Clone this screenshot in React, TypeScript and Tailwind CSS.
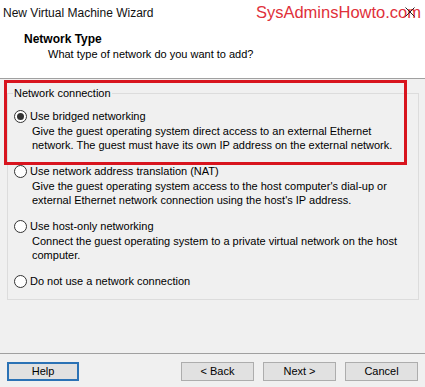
import React from 'react';

const options = [
  {
    label: 'Use bridged networking',
    desc: ['Give the guest operating system direct access to an external Ethernet', 'network. The guest must have its own IP address on the external network.'],
    checked: true,
  },
  {
    label: 'Use network address translation (NAT)',
    desc: ["Give the guest operating system access to the host computer's dial-up or", "external Ethernet network connection using the host's IP address."],
    checked: false,
  },
  {
    label: 'Use host-only networking',
    desc: ['Connect the guest operating system to a private virtual network on the host', 'computer.'],
    checked: false,
  },
  {
    label: 'Do not use a network connection',
    desc: [],
    checked: false,
  },
];

function Radio({ checked }: { checked: boolean }) {
  return (
    <span className="w-[13px] h-[13px] rounded-full border border-[#333333] bg-white flex items-center justify-center shrink-0">
      {checked && <span className="w-[7px] h-[7px] rounded-full bg-[#333333]" />}
    </span>
  );
}

function Button({ children, primary }: { children: React.ReactNode; primary?: boolean }) {
  return (
    <button
      className={`h-[19px] flex items-center justify-center bg-[#e1e1e1] text-[11px] leading-none text-black ${
        primary ? 'w-[72px] border-2 border-[#2b72b5]' : 'w-[73px] border border-[#adadad]'
      }`}
    >
      {children}
    </button>
  );
}

export default function App() {
  return (
    <div
      className="w-[425px] h-[387px] bg-[#f0f0f0] text-black relative overflow-hidden flex flex-col"
      style={{ fontFamily: '"Liberation Sans", Arial, sans-serif' }}
    >
      {/* Header */}
      <div className="h-[79px] bg-white border-b border-[#a0a0a0] shrink-0">
        <div className="h-[25px] flex items-center justify-between pl-[3px] pr-[4px]">
          <span className="text-[12px] text-[#111]">New Virtual Machine Wizard</span>
          <span className="text-[16.5px] text-[#e0303a]">SysAdminsHowto.com</span>
        </div>
        <div className="mt-[7px] pl-[24px] text-[12px] font-bold leading-[14px]">Network Type</div>
        <div className="mt-[1px] pl-[48px] text-[11px] leading-[14px]">What type of network do you want to add?</div>
      </div>

      {/* Body */}
      <div className="flex-1 text-[11px] leading-[14px]">
        <fieldset className="mt-[7px] ml-[7px] mr-[6px] h-[214px] border border-[#dcdcdc] pl-[6px] pr-[6px]">
          <legend className="px-[1px] -ml-[1px]">Network connection</legend>
          <div className="mt-[9px] flex flex-col gap-[12px]">
            {options.map((o) => (
              <div key={o.label}>
                <div className="flex items-center gap-[3px] h-[14px]">
                  <Radio checked={o.checked} />
                  <span>{o.label}</span>
                </div>
                {o.desc.length > 0 && (
                  <div className="mt-[1px] pl-[18px]">
                    {o.desc.map((d) => (
                      <div key={d}>{d}</div>
                    ))}
                  </div>
                )}
              </div>
            ))}
          </div>
        </fieldset>
      </div>

      {/* Footer */}
      <div className="h-[34px] border-t border-[#a0a0a0] shrink-0 flex items-start pt-[8px] px-[7px] justify-between">
        <Button primary>Help</Button>
        <div className="flex gap-[9px] pr-[-1px]">
          <Button>&lt; Back</Button>
          <Button>Next &gt;</Button>
          <Button>Cancel</Button>
        </div>
      </div>

      {/* Close glyph */}
      <svg className="absolute left-[405px] top-[7px]" width="10" height="10" viewBox="0 0 10 10">
        <path d="M0.5 0.5 L9.5 9.5 M9.5 0.5 L0.5 9.5" stroke="#222" strokeWidth="1" />
      </svg>

      {/* Red highlight annotation */}
      <div className="absolute left-[4px] top-[80px] w-[403px] h-[85px] border-[3px] border-[#d8141e] pointer-events-none" />
    </div>
  );
}
